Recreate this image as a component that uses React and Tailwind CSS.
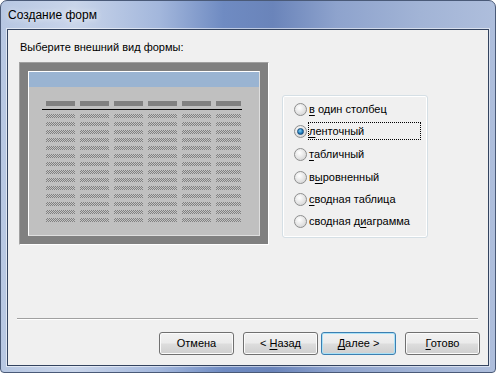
import React from 'react';

const font = { fontFamily: '"Liberation Sans", Arial, sans-serif' };

const options = [
  { pre: '', u: 'в', post: ' один столбец', h: 'h-[22px]' },
  { pre: '', u: 'л', post: 'енточный', h: 'h-[22px]', checked: true },
  { pre: '', u: 'т', post: 'абличный', h: 'h-[24px]' },
  { pre: 'в', u: 'ы', post: 'ровненный', h: 'h-[22px]' },
  { pre: '', u: 'с', post: 'водная таблица', h: 'h-[22px]' },
  { pre: 'сводная д', u: 'и', post: 'аграмма', h: 'h-[22px]' },
];

const colWidths = ['w-[29px]', 'w-[29px]', 'w-[29px]', 'w-[29px]', 'w-[29px]', 'w-[25px]'];

function Radio({ checked }) {
  return (
    <span className="w-[13px] h-[13px] shrink-0 rounded-full border border-[#8e8f8f] bg-[radial-gradient(circle_at_40%_35%,#ffffff,#dcdcdc_70%,#cfcfcf)] flex items-center justify-center">
      {checked && (
        <span className="w-[7px] h-[7px] rounded-full bg-[radial-gradient(circle_at_40%_35%,#7fd0f5,#1d78b8_60%,#0f4f86)] border border-[#174a7a]" />
      )}
    </span>
  );
}

function Preview() {
  return (
    <div className="w-[250px] h-[183px] border border-t-[#a0a0a0] border-l-[#a0a0a0] border-r-white border-b-white bg-[#808080] p-[8px]">
      <div className="w-full h-full border border-t-white border-l-white border-r-[#dedede] border-b-[#dedede] bg-[#c0c0c0] flex flex-col">
        <div className="h-[15px] bg-[#9ab4d2]" />
        <div className="mt-[14px] flex gap-[5px] pl-[17px]">
          {colWidths.map((w, i) => (
            <div key={i} className={`${w} h-[5px] bg-[#808080]`} />
          ))}
        </div>
        <div className="ml-[13px] mt-[3px] w-[200px] h-px bg-black" />
        <div className="mt-[4px] flex flex-col gap-[4px] pl-[17px]">
          {Array.from({ length: 14 }).map((_, r) => (
            <div key={r} className="flex gap-[5px]">
              {colWidths.map((w, i) => (
                <div
                  key={i}
                  className={`${w} h-[4px] bg-[image:repeating-conic-gradient(#808080_0%_25%,#c4c4c4_0%_50%)] bg-[length:2px_2px]`}
                />
              ))}
            </div>
          ))}
        </div>
      </div>
    </div>
  );
}

function Button({ children, primary }) {
  return (
    <button
      className={`w-[75px] h-[23px] rounded-[3px] border text-[11px] text-black flex items-center justify-center bg-[linear-gradient(#f2f2f2_0%,#ebebeb_48%,#dddddd_52%,#cfcfcf_100%)] ${
        primary
          ? 'border-[#3c7fb1] shadow-[inset_0_0_0_1px_#a9e1f7]'
          : 'border-[#707070] shadow-[inset_0_0_0_1px_#fbfbfb]'
      }`}
      style={font}
    >
      <span className="whitespace-pre">{children}</span>
    </button>
  );
}

export default function App() {
  return (
    <div
      className="w-[496px] h-[373px] flex flex-col rounded-t-[7px] rounded-b-[4px] border border-[#4a5a78] bg-[linear-gradient(90deg,#b7c7e2_0%,#c9d5ea_15%,#a3b7dc_32%,#6f8bc2_45%,#6a84ba_55%,#8ea3cd_68%,#a2b4d6_85%,#aebedc_100%)] overflow-hidden"
      style={font}
    >
      <div className="h-[28px] flex items-center pl-[7px] text-[12px] text-black [text-shadow:0_0_6px_#ffffff]">
        Создание форм
      </div>
      <div className="mx-[6px] h-[337px] border border-[#33435f] bg-[#f0f0f0] shadow-[0_0_0_1px_rgba(255,255,255,0.55)] flex flex-col">
        <div className="mt-[11px] pl-[12px] text-[11px] leading-[13px] text-black">Выберите внешний вид формы:</div>
        <div className="mt-[8px] flex pl-[11px]">
          <Preview />
          <div className="ml-[13px] mt-[33px] w-[146px] h-[143px] rounded-[3px] border border-[#d5dfe5] shadow-[inset_0_0_0_1px_#ffffff] pl-[11px] pt-[2px] flex flex-col">
            {options.map((o, i) => (
              <div key={i} className={`${o.h} flex items-center text-[11px] text-black`}>
                <Radio checked={o.checked} />
                <span
                  className={`ml-[1px] h-[18px] block leading-[18px] pl-[1px] whitespace-pre ${
                    o.checked ? 'w-[113px] outline outline-1 outline-dotted outline-black -outline-offset-1' : ''
                  }`}
                >
                  {o.pre}
                  <u className="underline-offset-2">{o.u}</u>
                  {o.post}
                </span>
              </div>
            ))}
          </div>
        </div>
        <div className="mt-[73px] ml-[9px] w-[461px] h-[2px] border-t border-t-[#a0a0a0] border-b border-b-white" />
        <div className="mt-[12px] flex justify-end pr-[8px]">
          <Button>Отмена</Button>
          <div className="w-[9px]" />
          <Button>
            {'< '}<u className="underline-offset-2">Н</u>азад
          </Button>
          <div className="w-[3px]" />
          <Button primary>
            <u className="underline-offset-2">Д</u>{'алее >'}
          </Button>
          <div className="w-[9px]" />
          <Button>
            <u className="underline-offset-2">Г</u>отово
          </Button>
        </div>
      </div>
    </div>
  );
}
